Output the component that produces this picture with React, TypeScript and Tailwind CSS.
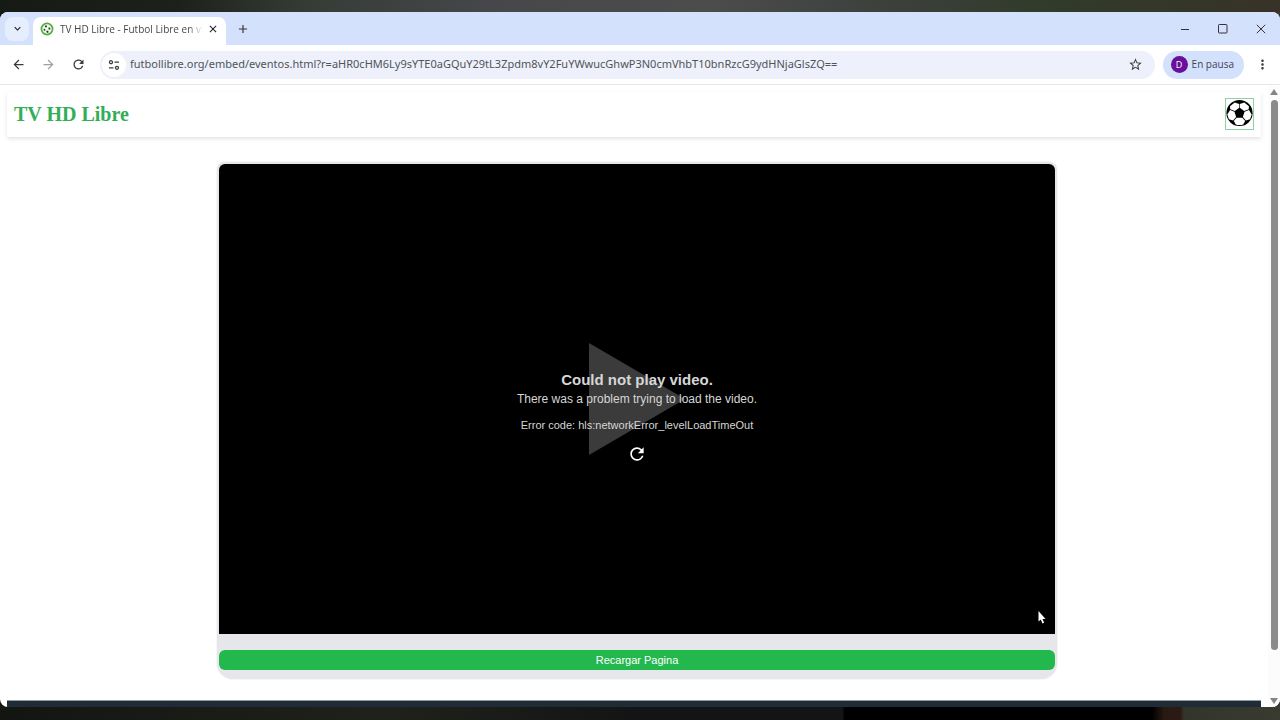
import { useState } from "react";
import {
  MdArrowBack,
  MdArrowForward,
  MdRefresh,
  MdStarBorder,
  MdMoreVert,
  MdAdd,
  MdClose,
  MdExpandMore,
} from "react-icons/md";

const PAGE_URL =
  "futbollibre.org/embed/eventos.html?r=aHR0cHM6Ly9sYTE0aGQuY29tL3Zpdm8vY2FuYWwucGhwP3N0cmVhbT10bnRzcG9ydHNjaGlsZQ==";

function Favicon() {
  return (
    <svg viewBox="0 0 14 14" className="h-3.5 w-3.5 shrink-0" aria-hidden="true">
      <circle cx="7" cy="7" r="5.6" fill="#f4faf2" stroke="#4fae3d" strokeWidth="1.7" />
      <path d="M5 3.6h1.9v1.7H5zM3.6 6.8l1.6.2v1.7H3.8zM8.4 5.6l1.9.2v1.8H8.6zM6.2 8.8l1.9-.1.6 1.6-1.8.6z" fill="#173d1d" />
    </svg>
  );
}

function SoccerBall() {
  return (
    <svg viewBox="0 0 28 28" className="h-7 w-full" aria-hidden="true">
      <circle cx="14" cy="14" r="13.6" fill="#000" />
      <g fill="#fff">
        <path d="M13.7 8.6 9.2 11.9 4.4 10.2 4.2 7 9 3.2 13.7 4.6z" />
        <path d="M14.3 8.6 18.8 11.9 23.6 10.2 23.8 7 19 3.2 14.3 4.6z" />
        <path d="M8.8 12.6 10.5 18.2 7.4 21.8 3 20.6 1.4 15.6 4.2 11z" />
        <path d="M19.2 12.6 17.5 18.2 20.6 21.8 25 20.6 26.6 15.6 23.8 11z" />
        <path d="M11 18.8h6l2.9 3.5-2 3.6a12.8 12.8 0 0 1-7.8 0l-2-3.6z" />
      </g>
    </svg>
  );
}

function TabStrip() {
  return (
    <div className="flex h-[33px] shrink-0 items-end bg-[#d4e1fc]">
      <div className="flex h-full items-center pl-[5px] pr-1">
        <button aria-label="Search tabs" className="flex h-6 w-6 items-center justify-center rounded-lg bg-[#e6eefd] text-[#1f1f1f]">
          <MdExpandMore size={13} />
        </button>
      </div>
      <div className="flex h-7 w-[193px] items-center rounded-t-lg bg-white pb-1 pl-[7px] pr-[7px]">
        <Favicon />
        <span className="ml-1.5 flex-1 overflow-hidden whitespace-nowrap text-[10px] text-[#474747] [mask-image:linear-gradient(to_right,black_90%,transparent)]">
          TV HD Libre - Futbol Libre en vi
        </span>
        <button aria-label="Close tab" className="ml-1 text-[#1f1f1f]">
          <MdClose size={12} />
        </button>
      </div>
      <button aria-label="New tab" className="flex h-full w-[34px] items-center justify-center text-[#333]">
        <MdAdd size={14} />
      </button>
      <div className="ml-auto flex h-full items-center text-[#333]">
        <button aria-label="Minimize" className="flex h-full w-[38px] items-center justify-center">
          <svg viewBox="0 0 10 10" className="h-2.5 w-2.5"><path d="M1 5.5h8" stroke="currentColor" /></svg>
        </button>
        <button aria-label="Maximize" className="flex h-full w-[38px] items-center justify-center">
          <svg viewBox="0 0 10 10" className="h-2.5 w-2.5"><rect x=".5" y=".5" width="8.5" height="8.5" rx=".8" fill="none" stroke="currentColor" /></svg>
        </button>
        <button aria-label="Close" className="flex h-full w-[38px] items-center justify-center">
          <svg viewBox="0 0 10 10" className="h-2.5 w-2.5"><path d="m.8.8 8.4 8.4M9.2.8.8 9.2" stroke="currentColor" fill="none" /></svg>
        </button>
      </div>
    </div>
  );
}

function Toolbar() {
  const [url, setUrl] = useState(PAGE_URL);

  return (
    <div className="flex h-10 shrink-0 items-center border-b border-[#e4e9ee] bg-white pl-[11px] pr-2.5 text-[#3c3c3c]">
      <button aria-label="Back"><MdArrowBack size={15} /></button>
      <button aria-label="Forward" className="ml-[15px] text-[#a0a0a0]"><MdArrowForward size={15} /></button>
      <button aria-label="Reload" className="ml-[15px]"><MdRefresh size={15} /></button>
      <div className="ml-3.5 flex h-7 flex-1 items-center rounded-full bg-[#eef1fb] pl-0.5 pr-3">
        <button aria-label="Site information" className="flex h-6 w-6 items-center justify-center rounded-full bg-white">
          <svg viewBox="0 0 12 12" className="h-3 w-3" fill="none" stroke="currentColor" strokeWidth="1.3">
            <circle cx="3" cy="3.2" r="1.5" />
            <path d="M6.5 3.2H11M1 8.8h4.5" />
            <circle cx="9" cy="8.8" r="1.5" />
          </svg>
        </button>
        <input
          aria-label="Address"
          value={url}
          onChange={(e) => setUrl(e.target.value)}
          className="ml-1 min-w-0 flex-1 bg-transparent font-['Noto_Sans',sans-serif] text-[11px] text-[#50535a] outline-none"
        />
        <button aria-label="Bookmark this page"><MdStarBorder size={15} /></button>
      </div>
      <button className="ml-2 flex h-7 items-center gap-1 rounded-full bg-[#d4e1fc] pl-2 pr-2.5 text-[10px] text-[#3b4557]">
        <span className="flex h-[17px] w-[17px] items-center justify-center rounded-full bg-[#6a0f9c] text-[9px] text-white">D</span>
        En pausa
      </button>
      <button aria-label="Menu" className="ml-[11px]"><MdMoreVert size={15} /></button>
    </div>
  );
}

function Player() {
  return (
    <div className="relative flex aspect-video flex-col items-center justify-center rounded-t-md bg-black pt-9 font-['Liberation_Sans',sans-serif] text-[#d6d6d6]">
      <div className="absolute inset-0 flex items-center justify-center">
        <svg viewBox="0 0 96 112" className="h-28 w-24" aria-hidden="true">
          <path d="M0 0 96 56 0 112z" fill="#3b3b3b" />
        </svg>
      </div>
      <h2 className="relative text-[15px] leading-5 font-bold">Could not play video.</h2>
      <p className="relative text-xs leading-[18px]">There was a problem trying to load the video.</p>
      <p className="relative mt-2 text-[11px] leading-[18px]">Error code: hls:networkError_levelLoadTimeOut</p>
      <button aria-label="Retry" className="relative mt-2.5 text-white">
        <MdRefresh size={20} />
      </button>
      <svg viewBox="0 0 8 13" className="absolute right-[9px] bottom-2.5 h-[13px] w-2" aria-hidden="true">
        <path d="M.5 0v10.5l2.3-2 1.6 4 1.7-.8-1.6-3.7h3z" fill="#fff" />
      </svg>
    </div>
  );
}

function Scrollbar() {
  return (
    <div className="flex w-3 shrink-0 flex-col items-center bg-[#fcfcfc] pt-1 pb-[3px]" aria-hidden="true">
      <svg viewBox="0 0 8 6" className="h-1.5 w-2"><path d="M4 0 8 6H0z" fill="#858585" /></svg>
      <div className="mt-[5px] flex w-full flex-1 justify-center">
        <div className="h-[92%] w-[7px] rounded-full bg-[#8b8b8b]" />
      </div>
      <svg viewBox="0 0 8 6" className="h-1.5 w-2"><path d="M0 0h8L4 6z" fill="#858585" /></svg>
    </div>
  );
}

export default function App() {
  return (
    <div className="flex h-screen flex-col bg-[linear-gradient(to_right,#131511,#1f221a_30%,#141414_50%,#141414_65.8%,#000_66%,#000_90%,#2b1a14_91%,#2b1a14_92.2%,#33342a_92.5%,#3a3b30)] font-['Open_Sans',sans-serif]">
      <div className="h-3 shrink-0 bg-[linear-gradient(to_right,#161a15,#1d211c_14%,#353c35_24%,#45474a_38%,#4b4d4b_55%,#3b403b_70%,#303b2a_82%,#383229)]" />
      <div className="mb-[13px] flex min-h-0 flex-1 flex-col overflow-hidden rounded-lg bg-white">
        <TabStrip />
        <Toolbar />
        <div className="flex min-h-0 flex-1">
          <div className="flex min-w-0 flex-1 flex-col overflow-hidden px-[7px] pt-[7px]">
            <header className="flex h-[45px] shrink-0 items-center justify-between px-[7px] pb-0.5 shadow-[0_2px_4px_rgba(0,0,0,0.11)]">
              <h1 className="font-['Liberation_Serif',serif] text-xl font-bold text-[#34ad59]">
                TV HD Libre
              </h1>
              <a href="#" aria-label="Inicio" className="block h-8 w-[29px] border border-[#8fcfa8]">
                <SoccerBall />
              </a>
            </header>
            <main className="flex shrink-0 justify-center pt-[25px] pb-[21px] pl-1.5">
              <section className="w-full max-w-[840px] rounded-t-lg rounded-b-2xl bg-[#e6e7ea] p-0.5 pb-[9px] shadow-[0_0_2px_rgba(0,0,0,0.12)]">
                <Player />
                <button className="mt-4 block h-5 w-full rounded-md bg-[#23b84e] text-center font-['Liberation_Sans',sans-serif] text-[11px] text-white">
                  Recargar Pagina
                </button>
              </section>
            </main>
            <footer className="min-h-1.5 flex-1 border-t border-[#8b9ba3] bg-[#1f2b37]" />
          </div>
          <Scrollbar />
        </div>
      </div>
    </div>
  );
}
